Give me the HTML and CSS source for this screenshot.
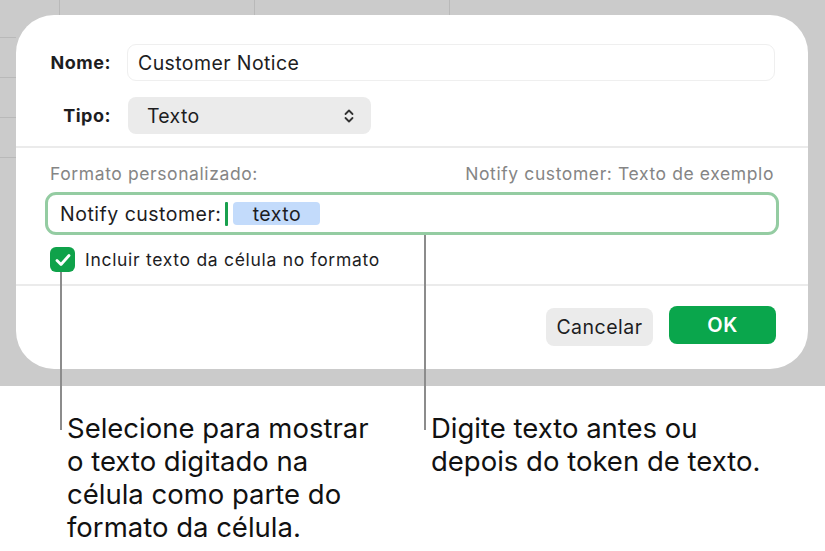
FILE: index.html
```html
<!DOCTYPE html>
<html lang="pt">
<head>
<meta charset="utf-8">
<link rel="stylesheet" href="styles.css">
</head>
<body>
<div class="page">
  <div class="stage">
    <div class="dialog">
      <div class="top">
        <div class="row">
          <span class="label">Nome:</span>
          <div class="name-field">Customer Notice</div>
        </div>
        <div class="row">
          <span class="label">Tipo:</span>
          <div class="popup">
            <span>Texto</span>
            <svg class="chev" width="10" height="16" viewBox="0 0 10 16"><polyline points="1.5,6 5,2.5 8.5,6" fill="none" stroke="#333" stroke-width="1.8" stroke-linecap="round" stroke-linejoin="round"/><polyline points="1.5,10 5,13.5 8.5,10" fill="none" stroke="#333" stroke-width="1.8" stroke-linecap="round" stroke-linejoin="round"/></svg>
          </div>
        </div>
      </div>
      <div class="format">
        <div class="format-head">
          <span>Formato personalizado:</span>
          <span>Notify customer: Texto de exemplo</span>
        </div>
        <div class="format-field">
          <span class="ftext">Notify customer:</span>
          <span class="caret"></span>
          <span class="token">texto</span>
        </div>
        <div class="check-row">
          <span class="checkbox"><svg width="16" height="14" viewBox="0 0 16 14"><polyline points="2,7.5 6,11.5 14,2.5" fill="none" stroke="#fff" stroke-width="2.8" stroke-linecap="round" stroke-linejoin="round"/></svg></span>
          <span>Incluir texto da célula no formato</span>
        </div>
      </div>
      <div class="buttons">
        <div class="btn cancel">Cancelar</div>
        <div class="btn ok">OK</div>
      </div>
    </div>
  </div>
  <div class="notes">
    <p class="note left">Selecione para mostrar o texto digitado na célula como parte do formato da célula.</p>
    <p class="note right">Digite texto antes ou depois do token de texto.</p>
  </div>
  <div class="callout c1"></div>
  <div class="callout c2"></div>
</div>
</body>
</html>
```

FILE: styles.css
```css
* { box-sizing: border-box; }
html, body { margin: 0; padding: 0; background: #fff; }
body { font-family: Inter, "Noto Sans", sans-serif; color: #1d1d1f; }
.page { position: relative; width: 825px; height: 551px; overflow: hidden; }
.stage {
  height: 386px;
  padding: 15px 17px 0 16px;
  background-color: #cbcbcb;
  background-image:
    linear-gradient(to right, transparent 59px, #b9b9b9 59px, #b9b9b9 60px, transparent 60px, transparent 254px, #b9b9b9 254px, #b9b9b9 255px, transparent 255px, transparent 449px, #b9b9b9 449px, #b9b9b9 450px, transparent 450px),
    repeating-linear-gradient(to bottom, transparent 0, transparent 37px, #b9b9b9 37px, #b9b9b9 38px, transparent 38px, transparent 40px);
  background-size: 825px 15px, 16px 160px;
  background-position: 0 0, 0 0;
  background-repeat: no-repeat, no-repeat;
}
.dialog {
  width: 792px;
  height: 354px;
  background: #fff;
  border-radius: 38px;
  display: flex;
  flex-direction: column;
}
.top {
  padding: 29px 33px 12px 0;
  display: flex;
  flex-direction: column;
  gap: 16px;
  border-bottom: 2px solid #ebebeb;
}
.row { display: flex; align-items: center; gap: 16px; }
.label { width: 95px; text-align: right; font-weight: 700; font-size: 18px; letter-spacing: 0.5px; color: #1d1d1f; }
.name-field {
  flex: 1;
  height: 37px;
  border: 1.5px solid #efefef;
  border-radius: 9px;
  padding-left: 10px;
  display: flex;
  align-items: center;
  font-size: 19.5px;
  letter-spacing: 0.4px;
  color: #1d1d1f;
}
.popup {
  width: 243px;
  height: 37px;
  margin-left: 1px;
  background: #ebebeb;
  border-radius: 8px;
  display: flex;
  align-items: center;
  justify-content: space-between;
  padding: 0 17px 0 19px;
  font-size: 19.5px;
  letter-spacing: 0.3px;
}
.format {
  padding: 13px 29px 12px 29px;
  border-bottom: 2px solid #ebebeb;
}
.format-head {
  display: flex;
  justify-content: space-between;
  padding: 0 5px 0 5px;
  font-size: 17.5px;
  letter-spacing: 0.6px;
  color: #858585;
  height: 24px;
  align-items: center;
}
.format-field {
  margin-top: 7px;
  height: 43px;
  border: 3px solid #94cca2;
  border-radius: 11px;
  display: flex;
  align-items: center;
  padding-left: 12px;
  font-size: 19.5px;
  letter-spacing: 0.5px;
}
.caret { width: 3px; height: 24px; background: #19a04e; margin-left: 4px; border-radius: 1px; }
.token {
  margin-left: 5px;
  width: 87px;
  height: 23px;
  background: #c3dbfb;
  border-radius: 4px;
  display: flex;
  align-items: center;
  justify-content: center;
  color: #1d1d1f;
}
.check-row {
  margin-top: 12px;
  display: flex;
  align-items: center;
  gap: 10px;
  padding-left: 5px;
  font-size: 17.5px;
  letter-spacing: 0.7px;
  color: #1d1d1f;
}
.checkbox {
  width: 25px;
  height: 25px;
  border-radius: 6px;
  background: #0fa24a;
  display: flex;
  align-items: center;
  justify-content: center;
}
.buttons {
  display: flex;
  justify-content: flex-end;
  align-items: center;
  gap: 16px;
  padding: 20px 32px 0 0;
}
.btn {
  width: 107px;
  height: 38px;
  border-radius: 8px;
  display: flex;
  align-items: center;
  justify-content: center;
  font-size: 19.5px;
  letter-spacing: 0.5px;
}
.cancel { background: #ebebeb; color: #1d1d1f; margin-top: 2px; }
.ok { background: #0aa64c; color: #fff; font-weight: 600; font-size: 20px; margin-bottom: 2px; }
.notes { display: flex; padding: 26px 0 0 67px; }
.note { margin: 0; font-size: 27.5px; line-height: 33px; color: #111; }
.note.left { width: 364px; padding-right: 50px; }
.note.right { width: 348px; }
.callout { position: absolute; width: 2px; background: #8c8c8c; }
.c1 { left: 60px; top: 272px; height: 158px; }
.c2 { left: 424px; top: 235px; height: 195px; }
```
